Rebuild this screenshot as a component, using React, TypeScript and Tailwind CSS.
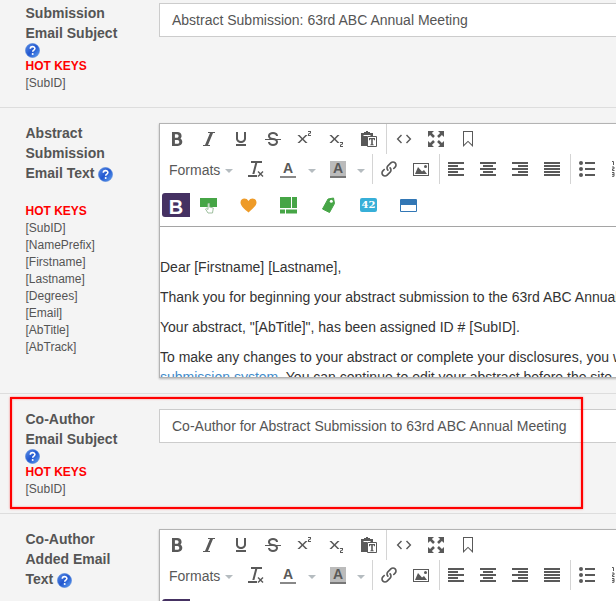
import type { ReactNode } from "react";
import {
  ImItalic,
  ImUnderline,
  ImStrikethrough,
  ImSuperscript,
  ImSubscript,
  ImLink,
  ImClearFormatting,
} from "react-icons/im";

function Svg({ children, className = "" }: { children: ReactNode; className?: string }) {
  return (
    <svg viewBox="0 0 16 16" className={`h-4 w-4 shrink-0 ${className}`} fill="currentColor">
      {children}
    </svg>
  );
}

function Bold() {
  return (
    <Svg>
      <path
        d="M11.300 7.600C12 7 12.600 6.100 12.600 4.900 12.600 2.600 10.800 1 8.400 1H3v14h5.900c2.500 0 4.400-1.700 4.400-3.900 0-1.600-.8-2.900-2-3.500zM5.900 3.200h2c1 0 1.700.8 1.700 1.800s-.7 1.800-1.700 1.800h-2zm2.600 9.600H5.900V9h2.600c1 0 1.800.8 1.800 1.900s-.8 1.900-1.800 1.900z"
        fillRule="evenodd"
      />
    </Svg>
  );
}

function PasteText() {
  return (
    <Svg>
      <path d="M0 2h3V1h2V0h2v1h2v1h3v3h-1.500V3.500H10V5H2V3.500H1.500v10H6V15H0z" />
      <path d="M1 2h10v3H6v10H1z" />
      <path d="M2.500 4.500h7M6 14" stroke="#fff" />
      <path d="M7 5.500h8.500v10H6.500v-10z" fill="#fff" stroke="currentColor" />
      <path d="M8 7h6v2.200h-.9l-.3-.9h-1v4.900l.9.200v.8H9.300v-.8l.9-.2V8.300h-1l-.3.900H8z" />
    </Svg>
  );
}

function Code() {
  return (
    <Svg>
      <path d="M5.500 3.900 1.600 8l3.900 4.100M10.500 3.900 14.400 8l-3.900 4.100" fill="none" stroke="currentColor" strokeWidth="1.400" />
    </Svg>
  );
}

function Fullscreen() {
  return (
    <Svg>
      <path d="M0 0h6L3.900 2.100l3 3-1.800 1.800-3-3L0 6zM16 0v6l-2.100-2.100-3 3-1.800-1.800 3-3L10 0zM0 16v-6l2.100 2.100 3-3 1.800 1.800-3 3L6 16zM16 16h-6l2.100-2.100-3-3 1.800-1.800 3 3L16 10z" />
    </Svg>
  );
}

function Bookmark() {
  return (
    <Svg>
      <path d="M3 0v16l5-5 5 5V0zM12 13.540 8 9.750l-4 3.790V1h8z" fillRule="evenodd" />
    </Svg>
  );
}

function Picture() {
  return (
    <Svg>
      <path d="M0 2v13h16V2zM15 14H1V3h14z" fillRule="evenodd" />
      <circle cx="12.5" cy="5.500" r="1.500" />
      <path d="M14 13H2l3-7 4 4.500L11 9z" />
    </Svg>
  );
}

const bars = {
  left: [[0, 16], [0, 10], [0, 16], [0, 10], [0, 16]],
  center: [[0, 16], [3, 10], [0, 16], [3, 10], [0, 16]],
  right: [[0, 16], [6, 10], [0, 16], [6, 10], [0, 16]],
  justify: [[0, 16], [0, 16], [0, 16], [0, 16], [0, 16]],
};

function Align({ type }: { type: keyof typeof bars }) {
  return (
    <Svg>
      {bars[type].map(([x, w], i) => (
        <rect key={i} x={x} y={1 + i * 3} width={w} height="2" />
      ))}
    </Svg>
  );
}

function Bullets() {
  return (
    <Svg>
      <path d="M6 1h10v2H6zM6 7h10v2H6zM6 13h10v2H6z" />
      <circle cx="2" cy="2" r="2" />
      <circle cx="2" cy="8" r="2" />
      <circle cx="2" cy="14" r="2" />
    </Svg>
  );
}

function Numbers() {
  return (
    <Svg>
      <path d="M6 1h10v2H6zM6 7h10v2H6zM6 13h10v2H6z" />
      <path d="M1 .5h1.500V4M1 6h2v1.800H1.500V9.500h2M1 11.500h2v3.800H1M1 13.400h2" fill="none" stroke="currentColor" />
    </Svg>
  );
}

function Caret() {
  return <span className="mt-[3px] block border-x-4 border-t-4 border-x-transparent border-t-[#b5bcc0]" />;
}

function Letter({ highlight = false }: { highlight?: boolean }) {
  return (
    <span
      className={`flex h-[17px] w-4 items-center justify-center border-b-2 text-[14px] leading-none font-bold ${
        highlight ? "border-[#777] bg-[#bbb]" : "border-[#888]"
      }`}
    >
      A
    </span>
  );
}

function Btn({ children }: { children: ReactNode }) {
  return <button className="flex h-[30px] w-8 shrink-0 items-center justify-center">{children}</button>;
}

function Group({ children, first = false }: { children: ReactNode; first?: boolean }) {
  return (
    <div className={`flex h-[30px] shrink-0 items-center ${first ? "" : "border-l border-[#d4d4d4]"}`}>
      {children}
    </div>
  );
}

function Toolbar() {
  return (
    <div className="h-[103px] border-b border-[#a5a5a5] pl-px text-[#595959]">
      <div className="flex">
        <Group first>
          <Btn><Bold /></Btn>
          <Btn><ImItalic /></Btn>
          <Btn><ImUnderline /></Btn>
          <Btn><ImStrikethrough /></Btn>
          <Btn><ImSuperscript /></Btn>
          <Btn><ImSubscript /></Btn>
          <Btn><PasteText /></Btn>
        </Group>
        <div className="w-px" />
        <Group>
          <span className="w-px" />
          <Btn><Code /></Btn>
          <Btn><Fullscreen /></Btn>
          <Btn><Bookmark /></Btn>
        </Group>
      </div>
      <div className="flex">
        <Group first>
          <button className="flex w-[79px] items-center gap-[5px] pt-[3px] pl-2 text-[14px]">
            Formats <span className="-mt-[3px]"><Caret /></span>
          </button>
          <Btn><ImClearFormatting /></Btn>
          <Btn><Letter /></Btn>
          <span className="flex w-[16px] justify-center"><Caret /></span>
          <span className="w-0.5" />
          <Btn><Letter highlight /></Btn>
          <span className="flex w-[14px] justify-center"><Caret /></span>
        </Group>
        <div className="w-[4px]" />
        <Group>
          <Btn><ImLink /></Btn>
          <Btn><Picture /></Btn>
        </Group>
        <div className="w-0.5" />
        <Group>
          <Btn><Align type="left" /></Btn>
          <Btn><Align type="center" /></Btn>
          <Btn><Align type="right" /></Btn>
          <Btn><Align type="justify" /></Btn>
        </Group>
        <div className="w-0.5" />
        <Group>
          <Btn><Bullets /></Btn>
          <Btn><Numbers /></Btn>
        </Group>
      </div>
      <div className="flex h-[42px] items-center pl-px">
        <span className="flex h-6 w-7 items-center justify-center rounded-l-[3px] bg-[#453162] pt-1 text-[20px] leading-none font-bold text-white">
          B
        </span>
        <div className="ml-2.5 flex items-center gap-[23px]">
          <svg className="h-[17px] w-[17px]" viewBox="0 0 17 17">
            <path d="M0 1h17v9H0z" fill="#46a546" />
            <path d="M8 6.500v6l-1.500-1.200-1 .7 2.500 4h4.500l.8-5-4-1V6.500z" fill="#fff" stroke="#9fbf9f" />
          </svg>
          <svg className="h-[17px] w-[17px]" viewBox="0 0 17 17">
            <path d="M8.500 15.500C5 12.500.5 9 .5 5.500.5 1 6.300 0 8.500 4c2.200-4 8-3 8 1.500 0 3.500-4.500 7-8 10z" fill="#ee9b28" />
          </svg>
          <svg className="h-[17px] w-[17px]" viewBox="0 0 17 17" fill="#46a546">
            <path d="M0 0h11v11H0zM12 0h5v11h-5zM0 12.500h5v4H0zM6 12.500h11v4H6z" />
          </svg>
          <svg className="h-[17px] w-[17px]" viewBox="0 0 17 17">
            <path d="M8 2 13.500 1l1 5.500L9.500 15.500 2.500 12z" fill="#46a546" stroke="#46a546" strokeLinejoin="round" />
            <circle cx="11.300" cy="4.300" r="1.500" fill="#fff" />
          </svg>
          <span className="flex h-[14px] w-[17px] items-center justify-center rounded-[2px] bg-[#37afd8] font-['DejaVu_Serif',serif] text-[10px] leading-none font-bold text-white">
            42
          </span>
          <span className="h-[13px] w-[17px] rounded-[1px] border border-t-[6px] border-[#3277b5] bg-white" />
        </div>
      </div>
    </div>
  );
}

function Editor({ children }: { children?: ReactNode }) {
  return (
    <div className="h-[255px] w-[700px] shrink-0 border border-[#b3b3b3] bg-white shadow-[0_1px_2px_rgba(0,0,0,0.25)]">
      <Toolbar />
      <div className="h-[150px] space-y-2.5 overflow-hidden pt-[30px] text-[14px] leading-5 whitespace-nowrap text-[#333]">
        {children}
      </div>
    </div>
  );
}

function Subject({ value }: { value: string }) {
  return (
    <div className="flex h-[34px] w-[700px] shrink-0 items-center border border-[#ccc] bg-white px-3 text-[14px] text-[#555]">
      {value}
    </div>
  );
}

function Help() {
  return (
    <svg viewBox="0 0 15 15" className="inline-block h-[15px] w-[15px] align-top">
      <defs>
        <linearGradient id="help" x1="0" y1="0" x2="1" y2="1">
          <stop offset="0" stopColor="#5a8ee8" />
          <stop offset="0.5" stopColor="#2257cf" />
          <stop offset="1" stopColor="#63a6f5" />
        </linearGradient>
      </defs>
      <circle cx="7.500" cy="7.500" r="7" fill="url(#help)" stroke="#4c7fd6" strokeWidth="0.600" />
      <path d="M5.300 5.800C5.300 2.900 9.900 3 9.900 5.600c0 1.500-2.200 1.600-2.200 3.200" fill="none" stroke="#fff" strokeWidth="1.600" />
      <circle cx="7.700" cy="11" r="1" fill="#fff" />
    </svg>
  );
}

interface RowProps {
  label: string[];
  keys?: string[];
  inlineHelp?: boolean;
  marked?: boolean;
  children: ReactNode;
}

function Row({ label, keys, inlineHelp = false, marked = false, children }: RowProps) {
  return (
    <section className="relative flex border-b border-[#ddd] py-[15px] pl-[25px]">
      <div className="w-[134px] shrink-0">
        <div className="text-[14px] leading-5 font-bold text-[#555]">
          {label.map((line, i) => (
            <div key={line} className="flex pl-[0.5px] whitespace-nowrap">
              {line}
              {inlineHelp && i === label.length - 1 && (
                <span className="mt-[3.5px] ml-[3.5px] h-4 leading-none"><Help /></span>
              )}
            </div>
          ))}
        </div>
        {!inlineHelp && <div className="h-[15px] leading-none"><Help /></div>}
        {keys && (
          <div className={`pl-[0.5px] text-[12px] leading-[17px] text-[#555] ${inlineHelp ? "mt-5" : ""}`}>
            <div className="font-bold text-[#f00]">HOT KEYS</div>
            {keys.map((key) => (
              <div key={key}>[{key}]</div>
            ))}
          </div>
        )}
      </div>
      {children}
      {marked && (
        <div className="absolute top-[3px] left-[10px] h-[112px] w-[573px] border-2 border-[#f00] shadow-[0_0_2px_rgba(255,0,0,0.5),inset_0_0_2px_rgba(255,0,0,0.5)]" />
      )}
    </section>
  );
}

const emailKeys = ["SubID", "NamePrefix", "Firstname", "Lastname", "Degrees", "Email", "AbTitle", "AbTrack"];

function App() {
  return (
    <main className="h-[601px] w-[616px] overflow-hidden bg-[#f4f4f4] font-['Liberation_Sans',Arial,sans-serif]">
      <div className="-mt-3">
        <div className="h-[120px] [&>section]:h-[120px]">
          <Row label={["Submission", "Email Subject"]} keys={["SubID"]}>
            <Subject value="Abstract Submission: 63rd ABC Annual Meeting" />
          </Row>
        </div>
        <Row label={["Abstract", "Submission", "Email Text"]} keys={emailKeys} inlineHelp>
          <Editor>
            <p>Dear [Firstname] [Lastname],</p>
            <p>Thank you for beginning your abstract submission to the 63rd ABC Annual Meeting.</p>
            <p>Your abstract, "[AbTitle]", has been assigned ID # [SubID].</p>
            <p>
              To make any changes to your abstract or complete your disclosures, you will
              <br />
              <a className="text-[#428bca]">submission system</a>. You can continue to edit your abstract before the site
            </p>
          </Editor>
        </Row>
        <div className="h-[120px] [&>section]:h-[120px]">
          <Row label={["Co-Author", "Email Subject"]} keys={["SubID"]} marked>
            <Subject value="Co-Author for Abstract Submission to 63rd ABC Annual Meeting" />
          </Row>
        </div>
        <Row label={["Co-Author", "Added Email", "Text"]} inlineHelp>
          <Editor />
        </Row>
      </div>
    </main>
  );
}

export default App;
